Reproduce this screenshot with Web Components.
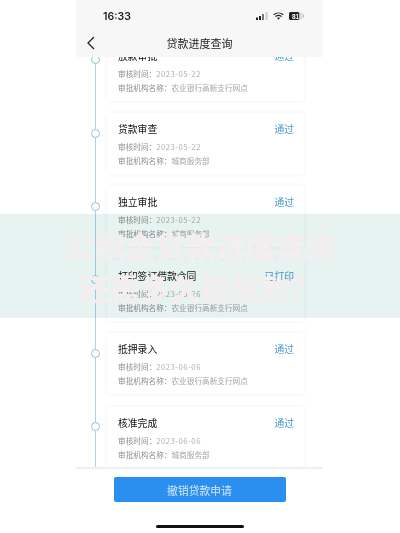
<!DOCTYPE html>
<html>
<head>
<meta charset="utf-8">
<title>贷款进度查询</title>
<style>
  html, body { margin: 0; padding: 0; background: #fff; }
  body { font-family: "Noto Sans CJK SC", "Liberation Sans", sans-serif; }
</style>
</head>
<body>
<phone-frame>
  <step-card title="放款审批" time="2023-05-22" org="农业银行高新支行网点" status="通过" cut></step-card>
  <step-card title="贷款审查" time="2023-05-22" org="城商服务部" status="通过"></step-card>
  <step-card title="独立审批" time="2023-05-22" org="城商服务部" status="通过"></step-card>
  <step-card title="打印签订借款合同" time="2023-05-26" org="农业银行高新支行网点" status="已打印"></step-card>
  <step-card title="抵押录入" time="2023-06-06" org="农业银行高新支行网点" status="通过"></step-card>
  <step-card title="核准完成" time="2023-06-06" org="城商服务部" status="通过"></step-card>
</phone-frame>
<water-band></water-band>

<script>
(function () {

    class PhoneFrame extends HTMLElement {
        constructor() {
            super();
            this.attachShadow({mode: 'open'});
            this.shadowRoot.innerHTML = `
            <style>
              :host {
                display: flex;
                flex-direction: column;
                width: 247px;
                height: 533px;
                margin-left: 76px;
                background: #fff;
                overflow: hidden;
                filter: blur(.3px);
              }
              .top {
                flex: none;
                position: relative;
                z-index: 1;
                height: 57px;
                background: #f7f7f7;
                display: flex;
                flex-direction: column;
              }
              .status {
                height: 32px;
                flex: none;
                display: flex;
                align-items: center;
                justify-content: space-between;
                padding: 0 19px 0 27px;
                font: 600 10.5px "Inter", "Liberation Sans", sans-serif;
                color: #222;
              }
              .icons { display: flex; align-items: center; gap: 5px; }
              .nav {
                position: relative;
                flex: 1;
                display: flex;
                align-items: center;
                justify-content: center;
                font-size: 11px;
                color: #222;
                padding-bottom: 3px;
              }
              .back { position: absolute; left: 10px; top: 4px; }
              .list {
                flex: none;
                height: 410px;
                overflow: hidden;
                position: relative;
                display: flex;
                flex-direction: column;
                gap: 12.4px;
                padding-left: 31px;
                padding-right: 19px;
              }
              .line {
                position: absolute;
                left: 18.6px;
                top: 0;
                bottom: 0;
                width: 1.2px;
                background: #a8d4ec;
              }
              .foot {
                flex: none;
                height: 66px;
                border-top: 2px solid #f0f0f0;
                display: flex;
                flex-direction: column;
                align-items: center;
              }
              .btn {
                margin-top: 8px;
                width: 172px;
                height: 25px;
                border-radius: 2px;
                background: #2b8ff0;
                color: #d4e8fc;
                font-size: 10.8px;
                display: flex;
                align-items: center;
                justify-content: center;
              }
              .home {
                margin-top: 23px;
                width: 88px;
                height: 3px;
                border-radius: 2px;
                background: #111;
              }
            </style>
            <div class="top">
              <div class="status">
                <span>16:33</span>
                <span class="icons">
                  <svg width="12" height="8" viewBox="0 0 12 8">
                    <rect x="0" y="5.5" width="2" height="2.5" fill="#222"/>
                    <rect x="3" y="4" width="2" height="4" fill="#222"/>
                    <rect x="6" y="2" width="2" height="6" fill="#777"/>
                    <rect x="9.5" y="0" width="2" height="8" fill="#ccc"/>
                  </svg>
                  <svg width="11" height="8" viewBox="0 0 11 8">
                    <path d="M.7 2.8C3.5.4 7.5.4 10.3 2.8M2.4 4.6C4.2 3.2 6.8 3.2 8.6 4.6" fill="none" stroke="#222" stroke-width="1.2"/>
                    <path d="M5.5 7.8 4 6C4.9 5.4 6.1 5.4 7 6Z" fill="#222"/>
                  </svg>
                  <svg width="15" height="8" viewBox="0 0 15 8">
                    <rect x="0" y="0" width="10.5" height="8" rx="1.6" fill="#222"/>
                    <rect x="10.5" y="0.5" width="3" height="7" rx="1" fill="#ddd"/>
                    <rect x="14" y="2.5" width="1" height="3" fill="#bbb"/>
                    <text x="6.5" y="6.6" text-anchor="middle" font-size="6.5" font-weight="700" font-family="Liberation Sans" fill="#fff">81</text>
                  </svg>
                </span>
              </div>
              <div class="nav">
                <svg class="back" width="9" height="14" viewBox="0 0 9 14"><path d="M8 1 2 7l6 6" fill="none" stroke="#222" stroke-width="1.3"/></svg>
                贷款进度查询
              </div>
            </div>
            <div class="list">
              <div class="line"></div>
              <slot></slot>
            </div>
            <div class="foot">
              <div class="btn">撤销贷款申请</div>
              <div class="home"></div>
            </div>`;
        }
    }

    class StepCard extends HTMLElement {
        constructor() {
            super();
            this.attachShadow({mode: 'open'});
        }

        connectedCallback() {
            this.shadowRoot.innerHTML = `
            <style>
              :host {
                display: block;
                position: relative;
                flex: none;
                box-sizing: border-box;
                width: 197px;
                height: 61px;
                padding: 8px 10px 0 11px;
                background: #fff;
                border-radius: 2px;
                box-shadow: 0 0 5px rgba(0, 0, 0, .06);
              }
              :host([cut]) { margin-top: -17.4px; }
              .head { display: flex; justify-content: space-between; font-size: 9.8px; line-height: 16px; color: #111; margin-bottom: 3px; }
              .state { color: #4a9ad0; }
              .row { font-size: 7.65px; line-height: 14px; color: #8f8f8f; white-space: nowrap; }
              .val { color: #a6a6a6; }
              .num { letter-spacing: .55px; color: #b0b0b0; }
              .dot {
                position: absolute;
                left: -16.5px;
                top: 15.5px;
                box-sizing: border-box;
                width: 9px;
                height: 9px;
                border-radius: 50%;
                border: 1px solid #8fc0dc;
                background: #fff;
              }
            </style>
            <div class="dot"></div>
            <div class="head"><span>${this.getAttribute('title')}</span><span class="state">${this.getAttribute('status')}</span></div>
            <div class="row">审核时间：<span class="num">${this.getAttribute('time')}</span></div>
            <div class="row">审批机构名称：<span class="val">${this.getAttribute('org')}</span></div>`;
        }
    }

    // band laid over the screenshot: the tint multiplies, so dark text stays dark
    class WaterBand extends HTMLElement {
        constructor() {
            super();
            this.attachShadow({mode: 'open'});
            this.shadowRoot.innerHTML = `
            <style>
              :host {
                position: absolute;
                left: 0;
                top: 214px;
                width: 400px;
                height: 104px;
                overflow: hidden;
              }
              .tint {
                position: absolute;
                inset: 0;
                background: #e6f3f1;
                mix-blend-mode: multiply;
              }
              .words {
                position: absolute;
                inset: 0;
                box-sizing: border-box;
                padding-top: 10px;
                color: #f6eeee;
                font-size: 30px;
                font-weight: 700;
                line-height: 42px;
                text-align: center;
                white-space: nowrap;
                filter: blur(.6px);
              }
            </style>
            <div class="tint"></div>
            <div class="words">公积金贷款进度查询<br>还需多久能放款？</div>`;
        }
    }

    customElements.define('phone-frame', PhoneFrame);
    customElements.define('step-card', StepCard);
    customElements.define('water-band', WaterBand);
})();
</script>
</body>
</html>
